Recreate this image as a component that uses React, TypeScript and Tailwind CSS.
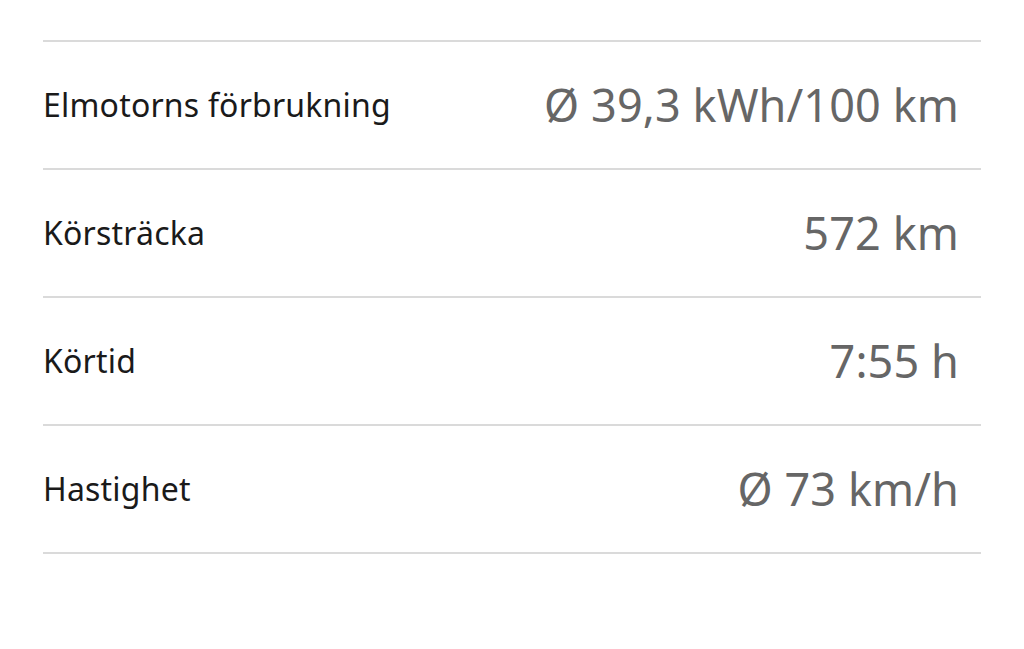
import React from "react";

const rows = [
  { label: "Elmotorns förbrukning", value: "Ø 39,3 kWh/100 km" },
  { label: "Körsträcka", value: "572 km" },
  { label: "Körtid", value: "7:55 h" },
  { label: "Hastighet", value: "Ø 73 km/h" },
];

export default function App() {
  return (
    <div
      className="h-[649px] w-[1024px] bg-white px-[43px] pt-[40px]"
      style={{ fontFamily: '"Noto Sans", "Open Sans", sans-serif' }}
    >
      <div className="border-t-2 border-[#dadada]">
        {rows.map((row) => (
          <div
            key={row.label}
            className="flex h-[128px] items-center justify-between border-b-2 border-[#dadada] pr-[22px]"
          >
            <span className="text-[32px] tracking-[0.2px] text-[#1a1a1a]">{row.label}</span>
            <span className="text-[45px] tracking-[0.1px] text-[#666666]">{row.value}</span>
          </div>
        ))}
      </div>
    </div>
  );
}
